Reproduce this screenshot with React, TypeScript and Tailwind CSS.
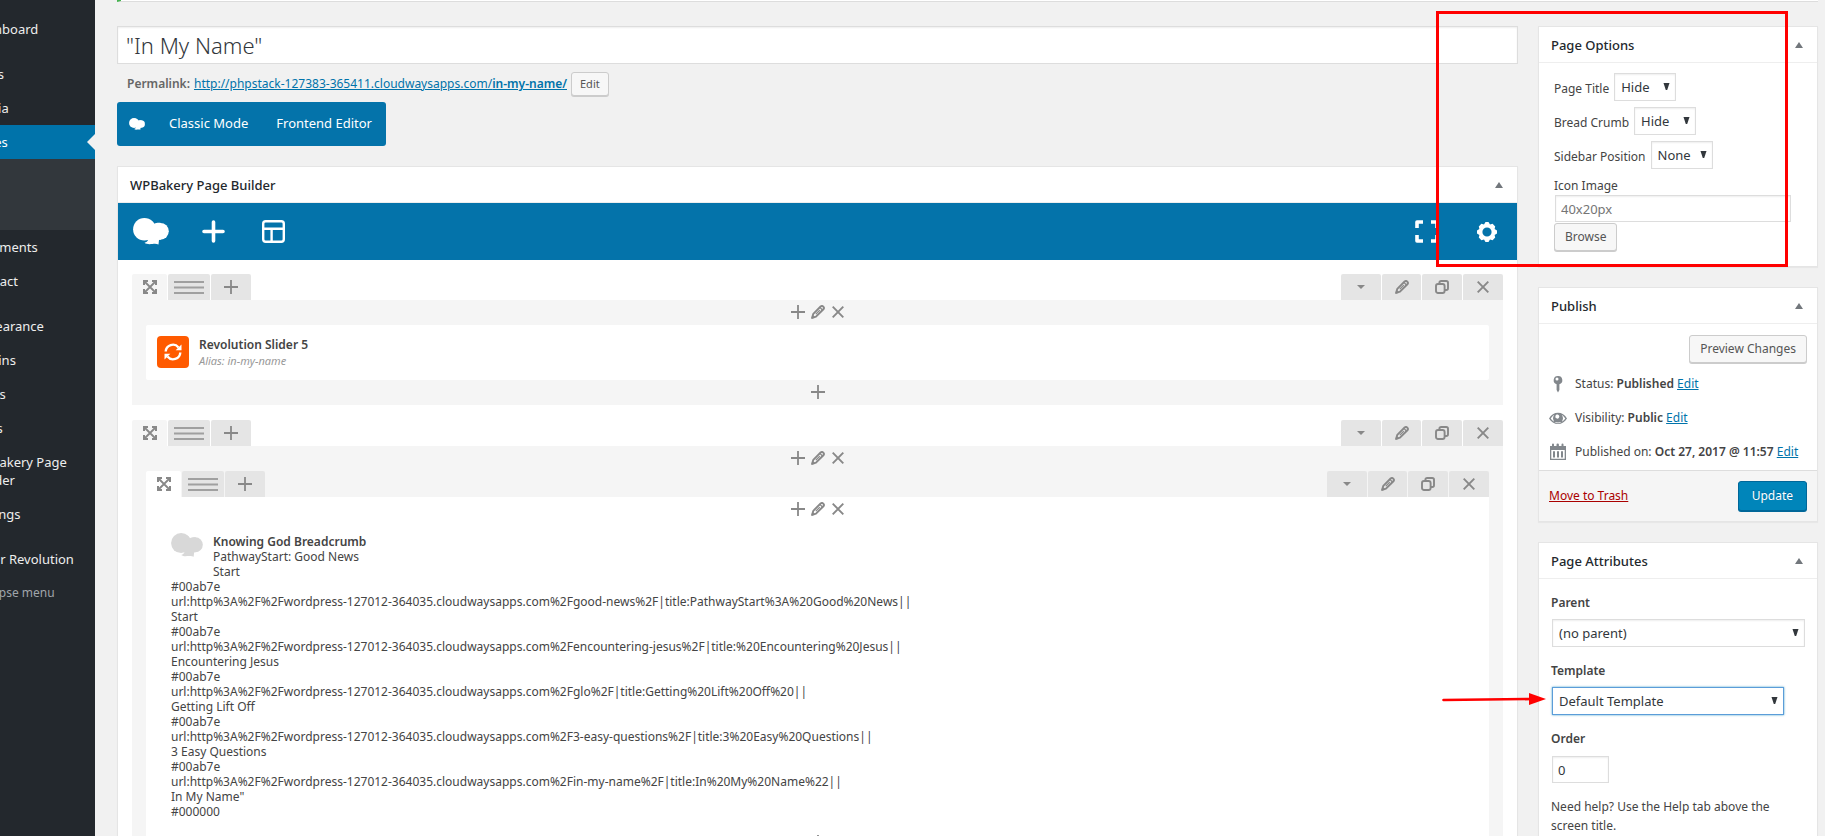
import React, { useId } from "react";

type IconProps = { className?: string };

function BakeryLogo({ className }: IconProps) {
  return (
    <svg viewBox="0 0 36 27" className={className} fill="currentColor" aria-hidden="true">
      <circle cx="11.4" cy="11.3" r="11.3" />
      <circle cx="27.4" cy="13.3" r="8.4" />
      <path d="M17 2 C19 3 20.5 4.5 21.3 5.8 C23 4.8 26 4.6 28 5 L28 21.5 L26 22 L25.5 26.6 C23.5 25.6 21.5 25.8 19.5 26 C16.5 26.3 13.5 26.4 11.5 24.8 C13.5 24.3 14.3 23.4 15 22 Z" />
    </svg>
  );
}

function Plus({ className }: IconProps) {
  return (
    <svg viewBox="0 0 14 14" className={className} stroke="currentColor" strokeWidth="1.8" fill="none" aria-hidden="true">
      <path d="M7 0V14M0 7H14" />
    </svg>
  );
}

function Cross({ className }: IconProps) {
  return (
    <svg viewBox="0 0 12 12" className={className} stroke="currentColor" strokeWidth="1.9" fill="none" aria-hidden="true">
      <path d="M.7 .7L11.3 11.3M11.3 .7L.7 11.3" />
    </svg>
  );
}

function Pencil({ className }: IconProps) {
  return (
    <svg viewBox="0 0 14 14" className={className} stroke="currentColor" strokeWidth="1.9" fill="none" strokeLinejoin="round" aria-hidden="true">
      <path d="M1.2 12.8L2.3 8.8L9.6 1.5Q11 .4 12.3 1.6Q13.6 2.9 12.4 4.3L5 11.6Z" />
      <path d="M8.8 5.2L4.8 9.2" strokeWidth="1.2" />
      <path d="M8.9 2.4L11.5 5" strokeWidth="1.3" />
      <path d="M.5 13.5L1.6 10L4 12.4Z" fill="currentColor" strokeWidth=".5" />
    </svg>
  );
}

function Copy({ className }: IconProps) {
  return (
    <svg viewBox="0 0 14 14" className={className} stroke="currentColor" strokeWidth="1.9" fill="none" aria-hidden="true">
      <rect x="1" y="4" width="8.6" height="9" rx="2" />
      <path d="M4.4 4V2.8Q4.4 1 6.2 1H11.2Q13 1 13 2.8V8.2Q13 10 11.2 10H9.8" />
    </svg>
  );
}

function Expand({ className }: IconProps) {
  return (
    <svg viewBox="0 0 14 14" className={className} fill="none" stroke="currentColor" aria-hidden="true">
      <path d="M2 2L12 12M12 2L2 12" strokeWidth="1.8" />
      <path d="M1 5V1H5M9 1H13V5M13 9V13H9M5 13H1V9" strokeWidth="2" />
    </svg>
  );
}

function Lines({ className }: IconProps) {
  return (
    <svg viewBox="0 0 30 13" className={className} fill="currentColor" aria-hidden="true">
      <path d="M0 0H30V2H0ZM0 5.5H30V7.5H0ZM0 11H30V13H0Z" opacity=".75" />
    </svg>
  );
}

function Caret({ className }: IconProps) {
  return (
    <svg viewBox="0 0 8 4" className={className} fill="currentColor" aria-hidden="true">
      <path d="M0 0H8L4 4Z" />
    </svg>
  );
}

function Gear({ className }: IconProps) {
  return (
    <svg viewBox="-10 -10 20 20" className={className} fill="currentColor" aria-hidden="true">
      <path
        fillRule="evenodd"
        d="M-1.5-10H1.5L3-7.6L5.6-8.2L8.2-5.6L7.6-3L10-1.5V1.5L7.6 3L8.2 5.6L5.6 8.2L3 7.6L1.5 10H-1.5L-3 7.6L-5.6 8.2L-8.2 5.6L-7.6 3L-10 1.5V-1.5L-7.6-3L-8.2-5.6L-5.6-8.2L-3-7.6ZM0-4.6A4.6 4.6 0 1 0 0 4.6A4.6 4.6 0 1 0 0-4.6Z"
      />
    </svg>
  );
}

const lowerMenu = [
  ["Comments", "Contact"],
  ["Appearance", "Plugins", "Users", "Tools", "WPBakery Page Builder", "Settings"],
  ["Slider Revolution"],
];

function MenuItem({ label, current }: { label: string; current?: boolean }) {
  return (
    <a
      href="#"
      className={
        current
          ? "relative block w-40 bg-[#0073aa] py-2 pl-9 text-[13px] leading-[18px] text-white"
          : "block w-40 py-2 pl-9 pr-2 text-[13px] leading-[18px] text-[#eee]"
      }
    >
      {label}
      {current && (
        <svg viewBox="0 0 8 16" className="absolute right-0 top-[9px] h-4 w-2 text-[#f1f1f1]" fill="currentColor" aria-hidden="true">
          <path d="M8 0V16L0 8Z" />
        </svg>
      )}
    </a>
  );
}

function AdminMenu() {
  return (
    <nav className="flex w-[95px] shrink-0 justify-end overflow-hidden bg-[#23282d] pt-3">
      <div className="w-40 shrink-0">
        <MenuItem label="Dashboard" />
        <div className="mt-[11px]">
          <MenuItem label="Posts" />
          <MenuItem label="Media" />
          <MenuItem label="Pages" current />
          <div className="flex flex-col gap-1 bg-[#32373c] pb-[13px] pl-3 pt-3 text-[12px] leading-[21px]">
            <a href="#" className="font-semibold text-white">All Pages</a>
            <a href="#" className="text-[#b4b9be]">Add New</a>
          </div>
        </div>
        {lowerMenu.map((group, i) => (
          <div key={i} className={i === 0 ? "" : "mt-[11px]"}>
            {group.map((label) => (
              <MenuItem key={label} label={label} />
            ))}
          </div>
        ))}
        <button type="button" className="py-2 pl-9 text-[12px] leading-[18px] text-[#a0a5aa]">Collapse menu</button>
      </div>
    </nav>
  );
}

function PanelHeader({ title }: { title: string }) {
  return (
    <header className="flex h-9 justify-between border-b border-[#eee]">
      <h2 className="pl-3 text-[13px] font-medium leading-9 text-[#23282d]">{title}</h2>
      <button type="button" aria-label={"Toggle panel: " + title} className="flex w-9 items-center justify-center text-[#72777c]">
        <svg viewBox="0 0 8 6" className="h-[6px] w-2" fill="currentColor" aria-hidden="true">
          <path d="M4 0L8 6H0Z" />
        </svg>
      </button>
    </header>
  );
}

function Panel({ title, children }: { title: string; children: React.ReactNode }) {
  return (
    <section className="border border-[#e5e5e5] bg-white shadow-[0_1px_1px_rgba(0,0,0,0.04)]">
      <PanelHeader title={title} />
      {children}
    </section>
  );
}

function Select({ id, value, focused, width }: { id: string; value: string; focused?: boolean; width?: string }) {
  return (
    <span className={"relative inline-block " + (width ?? "w-[62px]")}>
      <select
        id={id}
        className={
          "block h-7 w-full appearance-none border bg-white pl-[6px] text-[13px] leading-[26px] text-[#32373c] outline-none " +
          (focused
            ? "border-[#5b9dd9] shadow-[0_0_2px_rgba(30,140,190,0.8)]"
            : "border-[#ddd] shadow-[inset_0_1px_2px_rgba(0,0,0,0.07)]")
        }
      >
        <option>{value}</option>
      </select>
      <svg viewBox="0 0 7 7" className="pointer-events-none absolute right-[6px] top-[10px] h-[7px] w-[7px] text-[#32373c]" fill="currentColor" aria-hidden="true">
        <path d="M.5 0H6.5L4.2 7H2.8Z" />
      </svg>
    </span>
  );
}

const secondary =
  "rounded-[3px] border border-[#ccc] bg-[#f7f7f7] text-[#555] shadow-[0_1px_0_#ccc]";

function OptionRow({ label, value }: { label: string; value: string }) {
  const id = useId();
  return (
    <div className="flex items-center gap-[5px]">
      <label htmlFor={id} className="pt-[3px]">{label}</label>
      <Select id={id} value={value} />
    </div>
  );
}

function PageOptions() {
  return (
    <Panel title="Page Options">
      <div className="px-[15px] pb-[15px] pt-[10px] text-[12px] leading-[18px] text-[#444]">
        <div className="flex flex-col gap-[6px]">
          <OptionRow label="Page Title" value="Hide" />
          <OptionRow label="Bread Crumb" value="Hide" />
          <OptionRow label="Sidebar Position" value="None" />
        </div>
        <label htmlFor="icon-image" className="mt-2 block">Icon Image</label>
        <input
          id="icon-image"
          placeholder="40x20px"
          className="ml-px block h-[27px] w-[236px] border border-[#ddd] pl-[5px] text-[13px] shadow-[inset_0_1px_2px_rgba(0,0,0,0.07)] placeholder:text-[#757575]"
        />
        <button type="button" className={"mt-px h-7 px-[10px] text-[12px] " + secondary}>Browse</button>
      </div>
    </Panel>
  );
}

function PinIcon() {
  return (
    <svg viewBox="0 0 18 18" className="h-[18px] w-[18px]" fill="currentColor" aria-hidden="true">
      <path fillRule="evenodd" d="M9 1A4.2 4.2 0 0 1 10.4 9.2V15L9 17.5L7.6 15V9.2A4.2 4.2 0 0 1 9 1ZM8 2.4A1.5 1.5 0 0 0 8 5.4A1.5 1.5 0 0 0 8 2.4Z" />
    </svg>
  );
}

function EyeIcon() {
  return (
    <svg viewBox="0 0 18 18" className="h-[18px] w-[18px]" fill="currentColor" aria-hidden="true">
      <path fillRule="evenodd" d="M0 9.5C2 5.8 5.4 3.8 9 3.8S16 5.8 18 9.5C16 13 12.6 15 9 15S2 13 0 9.5ZM1.7 9.5C3.4 12.2 6 13.6 9 13.6S14.6 12.2 16.3 9.5C15.3 7.9 14.2 6.7 12.8 6A5 5 0 1 1 5.2 6C3.8 6.7 2.7 7.9 1.7 9.5ZM8.6 5.6A2 2 0 1 0 9.9 8.8A2 2 0 0 0 8.6 5.6Z" />
    </svg>
  );
}

function CalendarIcon() {
  return (
    <svg viewBox="0 0 18 18" className="h-[18px] w-[18px]" fill="currentColor" aria-hidden="true">
      <path fillRule="evenodd" d="M1 3H3V1.5Q3 .5 4 .5T5 1.5V3H7.5V1.5Q7.5 .5 8.7 .5T9.9 1.5V3H12.5V1.5Q12.5 .5 13.5 .5T14.5 1.5V3H17V17H1ZM2.3 7V15.7H15.7V7ZM4 8.3H6V14.5H4ZM8 8.3H10V14.5H8ZM12 8.3H14V14.5H12Z" />
    </svg>
  );
}

const linkBlue = "text-[#0073aa] underline";

function StatusRow({ icon, label, value }: { icon: React.ReactNode; label: string; value: string }) {
  return (
    <div className="flex h-[34px] items-center text-[#444]">
      <span className="mr-2 text-[#82878c]">{icon}</span>
      <span className="whitespace-nowrap">
        {label}: <b className="font-semibold">{value}</b> <a href="#" className={linkBlue}>Edit</a>
      </span>
    </div>
  );
}

function Publish() {
  return (
    <Panel title="Publish">
      <div className="px-[10px] pb-px pt-[11px] text-[12px] leading-[18px]">
        <div className="flex justify-end pb-1">
          <button type="button" className={"h-7 px-[10px] text-[12px] " + secondary}>Preview Changes</button>
        </div>
        <StatusRow icon={<PinIcon />} label="Status" value="Published" />
        <StatusRow icon={<EyeIcon />} label="Visibility" value="Public" />
        <StatusRow icon={<CalendarIcon />} label="Published on" value="Oct 27, 2017 @ 11:57" />
      </div>
      <div className="flex items-center justify-between border-t border-[#ddd] bg-[#f5f5f5] p-[10px] text-[12px]">
        <a href="#" className="text-[#a00] underline">Move to Trash</a>
        <button
          type="button"
          className="h-[30px] rounded-[3px] border border-[#006799] bg-[#0085ba] px-[13px] text-[12px] text-white shadow-[0_1px_0_#006799] [text-shadow:0_-1px_1px_#006799]"
        >
          Update
        </button>
      </div>
    </Panel>
  );
}

function PageAttributes() {
  return (
    <Panel title="Page Attributes">
      <div className="px-3 pb-3 pt-[15px] text-[12px] leading-[18px] text-[#444]">
        <label htmlFor="parent" className="block font-semibold">Parent</label>
        <div className="mb-[15px] mt-[7px] flex pl-px">
          <Select id="parent" value="(no parent)" width="w-[254px]" />
        </div>
        <label htmlFor="template" className="block font-semibold">Template</label>
        <div className="mb-[15px] mt-[7px] flex pl-px">
          <Select id="template" value="Default Template" width="w-[232px]" focused />
        </div>
        <label htmlFor="order" className="block font-semibold">Order</label>
        <input
          id="order"
          defaultValue="0"
          className="ml-px mt-2 block h-[27px] w-[57px] border border-[#ddd] pl-[5px] text-[13px] text-[#32373c] shadow-[inset_0_1px_2px_rgba(0,0,0,0.07)]"
        />
        <p className="mt-[14px] pr-3 leading-[19px]">Need help? Use the Help tab above the screen title.</p>
      </div>
    </Panel>
  );
}

const tab = "flex h-[26px] items-center justify-center rounded-t-[2px] bg-[#e5e5e5]";

function RowTabs({ nested }: { nested?: boolean }) {
  return (
    <div className="flex justify-between text-[#888]">
      <div className="flex gap-px">
        <button type="button" aria-label="Move" className={"flex h-[26px] w-[35px] items-center justify-center rounded-t-[2px] " + (nested ? "bg-white" : "bg-[#f5f5f5]")}>
          <Expand className="h-[14px] w-[14px]" />
        </button>
        <button type="button" aria-label="Row layout" className={"w-[42px] " + tab}>
          <Lines className="h-[13px] w-[30px]" />
        </button>
        <button type="button" aria-label="Add column" className={"w-10 " + tab}>
          <Plus className="h-[14px] w-[14px]" />
        </button>
      </div>
      <div className="flex gap-px">
        <button type="button" aria-label="Toggle row" className={"w-10 " + tab}>
          <Caret className="h-1 w-2" />
        </button>
        <button type="button" aria-label="Edit row" className={"w-[39px] " + tab}>
          <Pencil className="h-[14px] w-[14px]" />
        </button>
        <button type="button" aria-label="Clone row" className={"w-10 " + tab}>
          <Copy className="h-[14px] w-[14px]" />
        </button>
        <button type="button" aria-label="Delete row" className={"w-10 " + tab}>
          <Cross className="h-3 w-3" />
        </button>
      </div>
    </div>
  );
}

function ColumnControls({ addOnly }: { addOnly?: boolean }) {
  return (
    <div className="flex h-[25px] items-start justify-center gap-[6px] pt-[5px] text-[#888]">
      <button type="button" aria-label="Add element"><Plus className="h-[14px] w-[14px]" /></button>
      {!addOnly && (
        <>
          <button type="button" aria-label="Edit column"><Pencil className="h-[14px] w-[14px]" /></button>
          <button type="button" aria-label="Delete column" className="px-px pt-px"><Cross className="h-3 w-3" /></button>
        </>
      )}
    </div>
  );
}

const host = "url:http%3A%2F%2Fwordpress-127012-364035.cloudwaysapps.com%2F";

const crumbLines = [
  "#00ab7e",
  host + "good-news%2F|title:PathwayStart%3A%20Good%20News||",
  "Start",
  "#00ab7e",
  host + "encountering-jesus%2F|title:%20Encountering%20Jesus||",
  "Encountering Jesus",
  "#00ab7e",
  host + "glo%2F|title:Getting%20Lift%20Off%20||",
  "Getting Lift Off",
  "#00ab7e",
  host + "3-easy-questions%2F|title:3%20Easy%20Questions||",
  "3 Easy Questions",
  "#00ab7e",
  host + "in-my-name%2F|title:In%20My%20Name%22||",
  "In My Name\"",
  "#000000",
];

function Builder() {
  return (
    <Panel title="WPBakery Page Builder">
      <div className="flex h-[57px] items-center justify-between bg-[#0473aa] pl-[15px] pr-5 text-white">
        <div className="flex items-center">
          <BakeryLogo className="h-[27px] w-9" />
          <button type="button" aria-label="Add new element" className="ml-[33px]">
            <svg viewBox="0 0 23 23" className="h-[23px] w-[23px]" stroke="currentColor" strokeWidth="3.6" strokeLinecap="round" aria-hidden="true">
              <path d="M11.5 2V21M2 11.5H21" />
            </svg>
          </button>
          <button type="button" aria-label="Templates" className="ml-[37px]">
            <svg viewBox="0 0 23 23" className="h-[23px] w-[23px]" stroke="currentColor" strokeWidth="2.4" fill="none" aria-hidden="true">
              <rect x="1.2" y="1.2" width="20.6" height="20.6" rx="2.5" />
              <path d="M1 8.8H22M9.6 8.8V22" />
            </svg>
          </button>
        </div>
        <div className="flex items-center gap-[38px]">
          <button type="button" aria-label="Full screen">
            <svg viewBox="0 0 24 23" className="h-[23px] w-6" stroke="currentColor" strokeWidth="3.6" fill="none" aria-hidden="true">
              <path d="M2 8V2H8M16 2H22V8M22 15V21H16M8 21H2V15" strokeLinejoin="round" />
            </svg>
          </button>
          <button type="button" aria-label="Settings"><Gear className="h-5 w-5" /></button>
        </div>
      </div>
      <div className="flex flex-col gap-[15px] p-[14px]">
        <div>
          <RowTabs />
          <div className="bg-[#f5f5f5] px-[14px]">
            <ColumnControls />
            <div className="flex h-[55px] gap-[10px] rounded-[2px] bg-white p-[11px]">
              <span className="flex h-8 w-8 items-center justify-center rounded-[4px] bg-[#ff5a00] text-white">
                <svg viewBox="0 0 18 18" className="h-[18px] w-[18px]" fill="none" stroke="currentColor" strokeWidth="2.4" aria-hidden="true">
                  <path d="M1.7 8.5A7.2 7.2 0 0 1 14.5 4.4M16.3 9.5A7.2 7.2 0 0 1 3.5 13.6" />
                  <path d="M17.5 1.5V7.3H11.7ZM.5 16.5V10.7H6.3Z" fill="currentColor" stroke="none" />
                </svg>
              </span>
              <div>
                <h4 className="text-[12px] font-semibold leading-[17px] text-[#444]">Revolution Slider 5</h4>
                <p className="text-[11px] italic leading-[15px] text-[#999]">Alias: in-my-name</p>
              </div>
            </div>
            <ColumnControls addOnly />
          </div>
        </div>
        <div>
          <RowTabs />
          <div className="bg-[#f5f5f5] px-[14px] pb-[14px]">
            <ColumnControls />
            <RowTabs nested />
            <div className="bg-white">
              <ColumnControls />
              <div className="px-[25px] pb-[11px] pt-3 text-[12px] leading-[15px] text-[#444]">
                <div className="flex gap-[10px]">
                  <BakeryLogo className="-mt-px h-6 w-8 text-[#d8d8d8]" />
                  <div>
                    <h4 className="font-semibold">Knowing God Breadcrumb</h4>
                    <p>PathwayStart: Good News<br />Start</p>
                  </div>
                </div>
                {crumbLines.map((line, i) => (
                  <p key={i} className="whitespace-nowrap">{line}</p>
                ))}
              </div>
              <ColumnControls addOnly />
            </div>
          </div>
        </div>
      </div>
    </Panel>
  );
}

function Annotations() {
  return (
    <div className="pointer-events-none absolute inset-0">
      <div className="absolute right-[37px] top-[11px] h-64 w-[352px] border-[3px] border-[#ff0000]" />
      <svg viewBox="0 0 104 12" className="absolute right-[279px] top-[693px] h-3 w-[104px]" aria-hidden="true">
        <path d="M1.5 7L90 6" stroke="#ff0000" strokeWidth="2.6" strokeLinecap="round" />
        <path d="M87 0L104 6L87 12Z" fill="#ff0000" />
      </svg>
    </div>
  );
}

export default function App() {
  return (
    <div className="relative flex h-screen overflow-hidden bg-[#f1f1f1] font-['Noto_Sans','Open_Sans',sans-serif]">
      <AdminMenu />
      <main className="min-w-0 flex-1 pl-[22px] pr-[7px]">
        <div className="h-[2px] border-b border-l-4 border-b-[#ddd] border-l-[#46b450] bg-white" />
        <div className="mt-6 flex items-start gap-5">
          <div className="min-w-0 flex-1">
            <input
              aria-label="Page title"
              defaultValue={'"In My Name"'}
              className="block h-[38px] w-full border border-[#ddd] bg-white px-2 text-[22px] font-light text-[#32373c] shadow-[inset_0_1px_2px_rgba(0,0,0,0.07)]"
            />
            <div className="mt-2 flex h-6 items-center gap-1 pl-[10px] text-[12px] text-[#666]">
              <span className="font-semibold">Permalink:</span>
              <a href="#" className={linkBlue}>
                http://phpstack-127383-365411.cloudwaysapps.com/<b className="font-semibold">in-my-name/</b>
              </a>
              <button type="button" className={"h-6 px-2 text-[11px] " + secondary}>Edit</button>
            </div>
            <div className="mb-5 mt-[6px] flex h-11 w-fit items-center rounded-[3px] bg-[#0473aa] pl-3 pr-[14px] text-[13px] text-white">
              <BakeryLogo className="h-3 w-4" />
              <button type="button" className="ml-6">Classic Mode</button>
              <button type="button" className="ml-7">Frontend Editor</button>
            </div>
            <Builder />
          </div>
          <aside className="flex w-[280px] shrink-0 flex-col gap-5">
            <PageOptions />
            <Publish />
            <PageAttributes />
          </aside>
        </div>
      </main>
      <Annotations />
    </div>
  );
}
